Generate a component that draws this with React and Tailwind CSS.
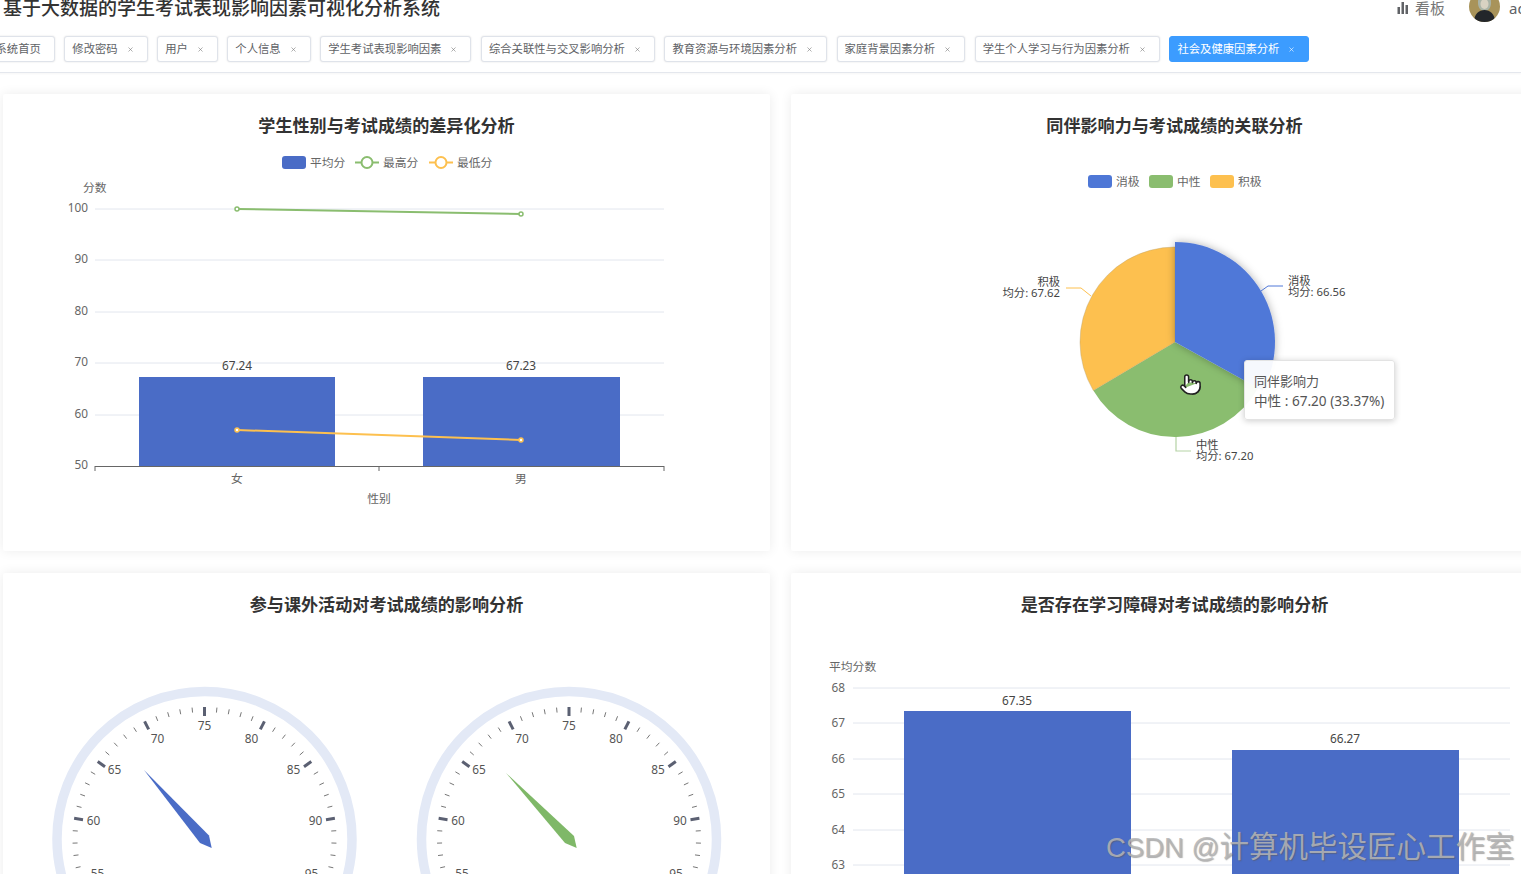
import React from 'react';
import { X, Pointer } from 'lucide-react';

const tags = [
  { label: '系统首页', closable: false },
  { label: '修改密码' },
  { label: '用户' },
  { label: '个人信息' },
  { label: '学生考试表现影响因素' },
  { label: '综合关联性与交叉影响分析' },
  { label: '教育资源与环境因素分析' },
  { label: '家庭背景因素分析' },
  { label: '学生个人学习与行为因素分析' },
  { label: '社会及健康因素分析', active: true },
];

const BLUE = '#4a6cc6';
const GREEN = '#8abd6f';
const YELLOW = '#fdc04f';
const LABEL = '#666';

// gauge number offsets from the dial centre, read off the picture
const gaugeNums = [
  [55, -107, 34],
  [60, -111, -19],
  [65, -90, -70],
  [70, -47, -101],
  [75, 0, -114],
  [80, 47, -101],
  [85, 89, -70],
  [90, 111, -19],
  [95, 107, 34],
];

function Tag({ label, closable = true, active = false }) {
  return (
    <div
      className={`flex items-center h-[26px] pl-[7px] pr-[13px] rounded-[3px] border text-[11.33px] shrink-0 ${
        active
          ? 'bg-[#3c9cff] border-[#3c9cff] text-white'
          : 'bg-white border-[#dfe3ea] text-[#606266] shadow-[0_0_2px_rgba(0,0,0,0.12)]'
      }`}
    >
      <span>{label}</span>
      {closable && <X size={7} strokeWidth={2} className={`ml-[9px] ${active ? 'text-white' : 'text-[#777]'}`} />}
    </div>
  );
}

function Card({ title, view, children }) {
  return (
    <div className="h-[457px] bg-white rounded-[2px] shadow-[0_0_12px_rgba(0,0,0,0.08)] overflow-hidden">
      <div className="pt-[20px] leading-[24px] text-[17.1px] font-bold text-[#333] text-center">{title}</div>
      <svg width="767" height="413" viewBox={view} className="block">
        {children}
      </svg>
    </div>
  );
}

function Txt({ x, y, anchor = 'start', size = 11.8, fill = LABEL, children }) {
  return (
    <text x={x} y={y} textAnchor={anchor} fontSize={size} fill={fill} dominantBaseline="central">
      {children}
    </text>
  );
}

function Grid({ rows, x1, x2, labelX, labelDy = -2 }) {
  return rows.map(([v, y]) => (
    <g key={v}>
      <line x1={x1} x2={x2} y1={y} y2={y} stroke="#e2e6ee" strokeWidth="1" />
      <Txt x={labelX} y={y + labelDy} anchor="end">{v}</Txt>
    </g>
  ));
}

function LegendLine({ x, y, color, label }) {
  return (
    <g>
      <line x1={x} x2={x + 24} y1={y} y2={y} stroke={color} strokeWidth="2" />
      <circle cx={x + 12} cy={y} r="5.5" fill="#fff" stroke={color} strokeWidth="2" />
      <Txt x={x + 28} y={y - 1}>{label}</Txt>
    </g>
  );
}

function LegendRect({ x, y, color, label }) {
  return (
    <g>
      <rect x={x} y={y - 6.5} width="24" height="13" rx="3" fill={color} />
      <Txt x={x + 28} y={y - 1}>{label}</Txt>
    </g>
  );
}

function GenderChart() {
  return (
    <>
      <LegendRect x={282} y={162.5} color={BLUE} label="平均分" />
      <LegendLine x={355} y={162.5} color={GREEN} label="最高分" />
      <LegendLine x={429} y={162.5} color={YELLOW} label="最低分" />
      <Txt x={83} y={187}>分数</Txt>
      <Grid rows={[[100, 209], [90, 260], [80, 312], [70, 363], [60, 415]]} x1={95} x2={664} labelX={88} />
      <Txt x={88} y={464} anchor="end">50</Txt>
      <rect x={139} y={377} width={196} height={89} fill={BLUE} />
      <rect x={423} y={377} width={197} height={89} fill={BLUE} />
      <Txt x={237} y={365} anchor="middle" fill="#444">67.24</Txt>
      <Txt x={521} y={365} anchor="middle" fill="#444">67.23</Txt>
      <line x1={95} x2={664} y1={466.5} y2={466.5} stroke="#666" />
      {[95, 379, 664].map((x) => (
        <line key={x} x1={x} x2={x} y1={466} y2={471} stroke="#666" />
      ))}
      <polyline points="237,209 521,214" fill="none" stroke={GREEN} strokeWidth="2" />
      <circle cx={237} cy={209} r="2" fill="#fff" stroke={GREEN} strokeWidth="1.5" />
      <circle cx={521} cy={214} r="2" fill="#fff" stroke={GREEN} strokeWidth="1.5" />
      <polyline points="237,430 521,440" fill="none" stroke={YELLOW} strokeWidth="2" />
      <circle cx={237} cy={430} r="2" fill="#fff" stroke={YELLOW} strokeWidth="1.5" />
      <circle cx={521} cy={440} r="2" fill="#fff" stroke={YELLOW} strokeWidth="1.5" />
      <Txt x={237} y={477.5} anchor="middle">女</Txt>
      <Txt x={521} y={477.5} anchor="middle">男</Txt>
      <Txt x={379} y={498} anchor="middle">性别</Txt>
    </>
  );
}

function slice(cx, cy, r, a0, a1) {
  const p = (a) => [cx + r * Math.sin((a * Math.PI) / 180), cy - r * Math.cos((a * Math.PI) / 180)];
  const [x0, y0] = p(a0);
  const [x1, y1] = p(a1);
  return `M${cx} ${cy}L${x0} ${y0}A${r} ${r} 0 0 1 ${x1} ${y1}Z`;
}

function PeerChart() {
  return (
    <>
      <defs>
        <filter id="pieShadow" x="-30%" y="-30%" width="160%" height="160%">
          <feDropShadow dx="0" dy="0" stdDeviation="4" floodColor="#000" floodOpacity="0.3" />
        </filter>
      </defs>
      <LegendRect x={1088} y={181.5} color="#4e77d6" label="消极" />
      <LegendRect x={1149} y={181.5} color={GREEN} label="中性" />
      <LegendRect x={1210} y={181.5} color={YELLOW} label="积极" />
      <path d={slice(1175, 342, 95, 119, 239.3)} fill={GREEN} />
      <path d={slice(1175, 342, 95, 239.3, 360)} fill={YELLOW} stroke="#b9a06a" strokeWidth="0.4" />
      <path d={slice(1175, 342, 100, 0, 119)} fill="#5078d8" filter="url(#pieShadow)" />
      <polyline points="1261,291 1268,286 1283,286" fill="none" stroke="#5078d8" />
      <polyline points="1091,296 1081,288 1066,288" fill="none" stroke={YELLOW} />
      <polyline points="1176,437 1176,451 1191,451" fill="none" stroke="#b5d3a5" strokeWidth="1.2" />
      <Txt x={1288} y={280} size={11.3} fill="#444">消极</Txt>
      <Txt x={1288} y={291.5} size={11.3} fill="#444">均分: 66.56</Txt>
      <Txt x={1060} y={281} size={11.3} anchor="end" fill="#444">积极</Txt>
      <Txt x={1060} y={292.5} size={11.3} anchor="end" fill="#444">均分: 67.62</Txt>
      <Txt x={1196} y={444} size={11.3} fill="#444">中性</Txt>
      <Txt x={1196} y={455.5} size={11.3} fill="#444">均分: 67.20</Txt>
    </>
  );
}

function Gauge({ cx, color, needle }) {
  const cy = 839;
  const pt = (a, r) => [cx + r * Math.cos((a * Math.PI) / 180), cy - r * Math.sin((a * Math.PI) / 180)];
  const ticks = [];
  for (let i = 0; i <= 50; i++) {
    const a = 225 - i * 5.4;
    const major = i % 5 === 0;
    const [x1, y1] = pt(a, 132);
    const [x2, y2] = pt(a, major ? 123 : 127);
    ticks.push(
      <line
        key={i}
        x1={x1}
        y1={y1}
        x2={x2}
        y2={y2}
        stroke={major ? '#5b6072' : '#777'}
        strokeWidth={major ? 3 : 1}
      />
    );
  }
  return (
    <g>
      <circle cx={cx} cy={cy} r="147.5" fill="none" stroke="#e3e9f6" strokeWidth="9.5" />
      {ticks}
      {gaugeNums.map(([n, dx, dy]) => (
        <Txt key={n} x={cx + dx} y={cy + dy} anchor="middle" fill="#555">
          {n}
        </Txt>
      ))}
      <polygon points={needle} fill={color} />
    </g>
  );
}

function ActivityChart() {
  return (
    <>
      <Gauge cx={204.5} color={BLUE} needle="144,770 209,835.5 211.7,848 200,843" />
      <Gauge cx={569} color="#7fb868" needle="506,773 574,836 576.7,848 565,843" />
    </>
  );
}

function DisorderChart() {
  return (
    <>
      <Txt x={829} y={666}>平均分数</Txt>
      <Grid
        rows={[[68, 688], [67, 723], [66, 759], [65, 794], [64, 830], [63, 865]]}
        x1={853}
        x2={1510}
        labelX={845}
        labelDy={-1}
      />
      <rect x={904} y={711} width={227} height={200} fill={BLUE} />
      <rect x={1232} y={750} width={227} height={200} fill={BLUE} />
      <Txt x={1017} y={700} anchor="middle" fill="#444">67.35</Txt>
      <Txt x={1345} y={738} anchor="middle" fill="#444">66.27</Txt>
    </>
  );
}

export default function App() {
  return (
    <div className="relative w-[1521px] h-[874px] overflow-hidden bg-white font-['Noto_Sans','Noto_Sans_CJK_SC',sans-serif]">
      <header className="flex items-center justify-between h-[50px] -mt-[17px] pl-[3px]">
        <h1 className="text-[19px] font-medium text-[#333] leading-none">基于大数据的学生考试表现影响因素可视化分析系统</h1>
        <div className="flex items-center -mr-[28px]">
          <svg width="12" height="12" viewBox="0 0 12 12" className="text-[#606266]">
            <rect x="0.5" y="5" width="2.5" height="7" fill="currentColor" />
            <rect x="4.5" y="0" width="2.5" height="12" fill="currentColor" />
            <rect x="8.5" y="3" width="2.5" height="9" fill="currentColor" />
          </svg>
          <span className="ml-[6px] text-[15px] text-[#777]">看板</span>
          <div className="ml-[24px] mb-[3px] w-[31px] h-[31px] rounded-full overflow-hidden">
            <svg width="31" height="31" viewBox="0 0 31 31">
              <rect width="31" height="31" fill="#a8935a" />
              <path d="M9 12c0-8 3-12 6.5-12S22 4 22 12c0 5-3 8-6.5 8S9 17 9 12z" fill="#a9b3a6" />
              <ellipse cx="15.5" cy="13" rx="4" ry="5" fill="#d8d2c2" />
              <path d="M5 31c0-8 5-12 10.5-12S26 23 26 31z" fill="#23262a" />
            </svg>
          </div>
          <span className="ml-[9px] text-[15px] text-[#606266] w-[40px]">admin</span>
        </div>
      </header>

      <nav className="flex gap-[9.5px] mt-[3px] -ml-[12.5px] pb-[10px] border-b border-[#e4e7ed] shadow-[0_1px_2px_rgba(0,0,0,0.04)]">
        {tags.map((t) => (
          <Tag key={t.label} {...t} />
        ))}
      </nav>

      <main className="grid grid-cols-[767px_767px] gap-x-[21px] gap-y-[22px] pl-[3px] pt-[21px]">
        <Card title="学生性别与考试成绩的差异化分析" view="3 138 767 413">
          <GenderChart />
        </Card>
        <Card title="同伴影响力与考试成绩的关联分析" view="791 138 767 413">
          <PeerChart />
        </Card>
        <Card title="参与课外活动对考试成绩的影响分析" view="3 617 767 413">
          <ActivityChart />
        </Card>
        <Card title="是否存在学习障碍对考试成绩的影响分析" view="791 617 767 413">
          <DisorderChart />
        </Card>
      </main>

      {/* pie tooltip and hover cursor */}
      <div className="absolute left-[1244px] top-[360px] w-[151px] h-[60px] bg-white/95 border border-[#e3e3e3] rounded-[3px] shadow-[0_1px_6px_rgba(0,0,0,0.2)] pl-[9px] pt-[11px] text-[#555]">
        <div className="text-[13px] leading-[19px]">同伴影响力</div>
        <div className="text-[13.6px] leading-[20px] whitespace-nowrap">中性 : 67.20 (33.37%)</div>
      </div>
      <Pointer size={23} strokeWidth={1.6} fill="#fff" className="absolute left-[1179px] top-[373px] text-[#222]" />

      {/* CSDN watermark */}
      <div className="absolute left-[1106px] top-[827px] text-[29.5px] leading-[40px] whitespace-nowrap text-[#b5b5b5]/85 font-['Liberation_Sans','Noto_Sans_CJK_SC',sans-serif] [text-shadow:1px_1px_1px_rgba(90,90,90,0.5)]">
        <span className="text-[27.5px]">CSDN @</span>计算机毕设匠心工作室
      </div>
    </div>
  );
}
